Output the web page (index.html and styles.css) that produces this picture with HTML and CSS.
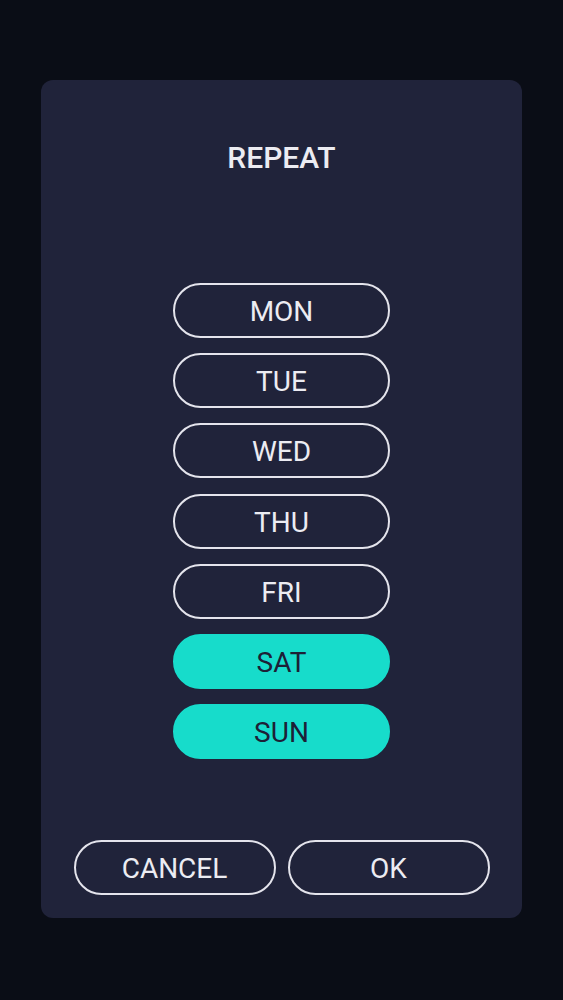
FILE: index.html
```html
<!DOCTYPE html>
<html lang="en">
<head>
<meta charset="utf-8">
<title>Repeat</title>
<link rel="stylesheet" href="styles.css">
</head>
<body>
<div class="dialog">
  <h1 class="title">REPEAT</h1>
  <div class="days">
    <button class="day">MON</button>
    <button class="day">TUE</button>
    <button class="day">WED</button>
    <button class="day">THU</button>
    <button class="day">FRI</button>
    <button class="day day--on">SAT</button>
    <button class="day day--on">SUN</button>
  </div>
  <div class="actions">
    <button class="action">CANCEL</button>
    <button class="action">OK</button>
  </div>
</div>
</body>
</html>
```

FILE: styles.css
```css
html, body {
  margin: 0;
  padding: 0;
  background: #0a0d16;
  height: 100%;
}
body {
  font-family: Roboto, "Noto Sans", sans-serif;
  padding-top: 80px;
  box-sizing: border-box;
}
.dialog {
  margin-left: 41px;
  width: 481px;
  height: 838px;
  box-sizing: border-box;
  background: #20233a;
  border-radius: 12px;
  display: flex;
  flex-direction: column;
  align-items: center;
  padding: 60px 32.5px 23px 32.5px;
}
.title {
  margin: 0;
  font-size: 30px;
  line-height: 35px;
  font-weight: 500;
  color: #ececf2;
  letter-spacing: 0;
}
.days {
  margin-top: 108px;
  display: flex;
  flex-direction: column;
  gap: 15.2px;
}
.day, .action {
  font-family: Roboto, "Noto Sans", sans-serif;
  font-size: 28px;
  font-weight: 400;
  color: #ececf2;
  background: transparent;
  border: 2px solid #e4e4ec;
  border-radius: 28px;
  height: 55px;
  box-sizing: border-box;
  padding: 2px 0 0;
  line-height: 49px;
}
.day {
  width: 217px;
}
.day--on {
  background: #17dccb;
  border-color: #17dccb;
  color: #1d2036;
}
.actions {
  margin-top: auto;
  display: flex;
  gap: 12px;
  width: 100%;
}
.action {
  flex: 1;
}
```
